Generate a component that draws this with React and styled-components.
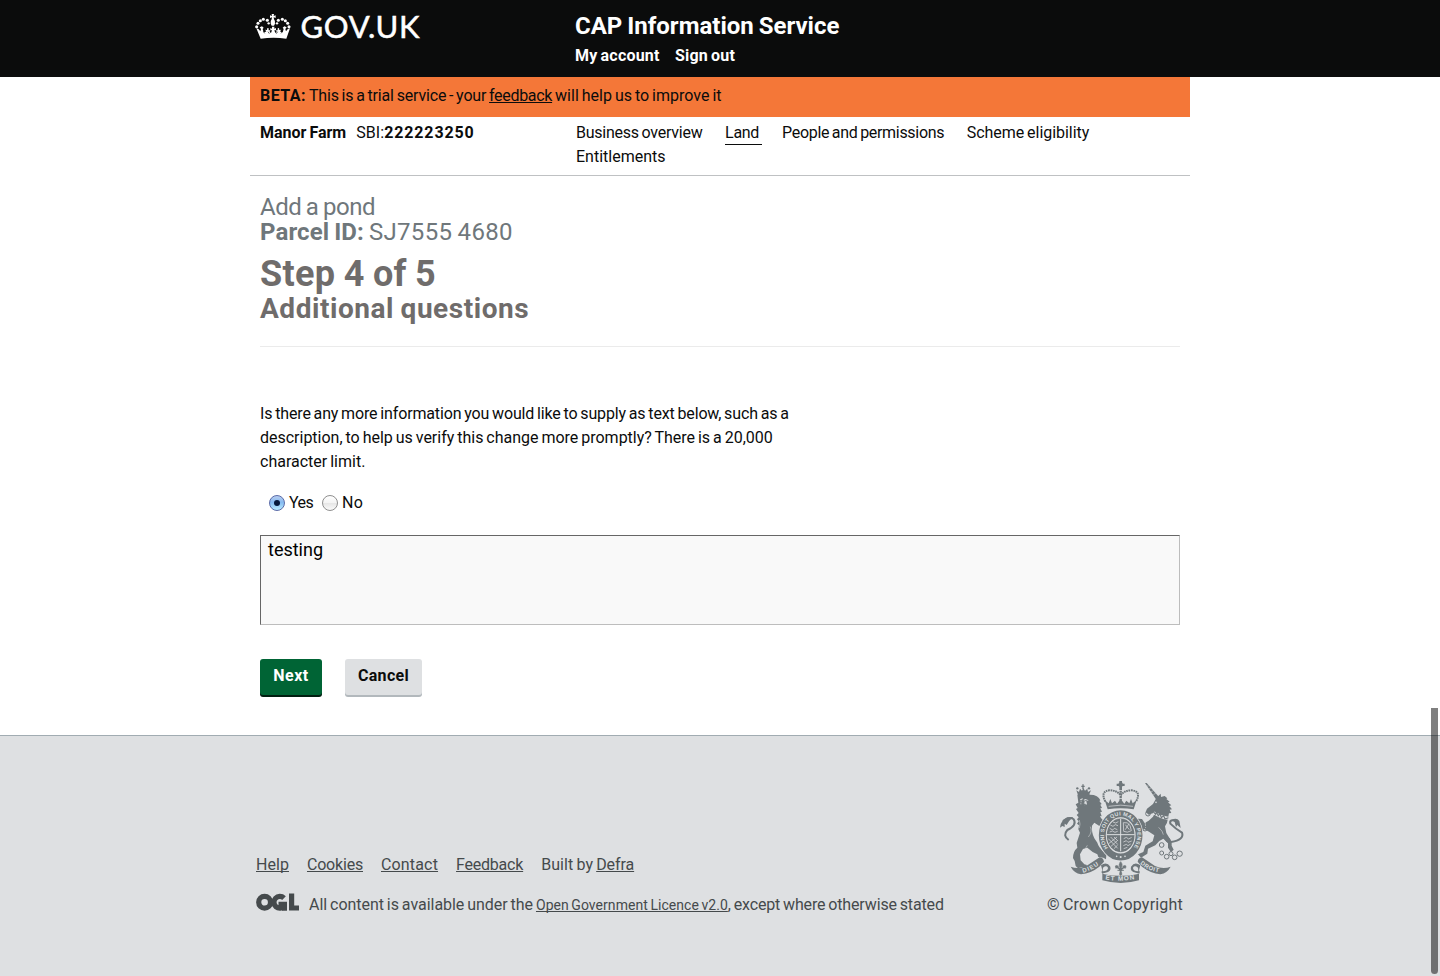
import React from 'react';
import styled, { createGlobalStyle } from 'styled-components';

const GlobalStyle = createGlobalStyle`
  * { box-sizing: border-box; }
  html, body { margin: 0; background: #fff; }
  body {
    height: 976px;
    overflow: hidden;
    font: 400 16px/24px Roboto, "Liberation Sans", sans-serif;
    word-spacing: -1px;
    color: #0b0c0c;
  }
`;

const Text = styled.span`
  letter-spacing: ${(p) => p.$track || 0}px;
  white-space: pre;
`;
const Strong = styled(Text).attrs({ as: 'strong' })`
  font-weight: 700;
`;
const Link = styled(Text).attrs({ as: 'a', href: '#' })`
  color: inherit;
  text-decoration: ${(p) => (p.$plain ? 'none' : 'underline')};
  text-decoration-thickness: 1px;
  text-underline-offset: 1px;
  text-decoration-skip-ink: none;
`;

const Page = styled.div`
  position: relative;
  height: 976px;
  display: flex;
  flex-direction: column;
`;
const Container = styled.div`
  width: 940px;
  margin: 0 auto;
`;

const Header = styled.header`
  height: 77px;
  background: #0b0c0c;
  color: #fff;
`;
const HeaderInner = styled(Container)`
  display: grid;
  grid-template-columns: 320px 1fr;
  padding-left: 5px;
`;
const Brand = styled.a`
  display: flex;
  gap: 10px;
  padding-top: 13px;
  color: #fff;
`;
const ServiceName = styled.div`
  padding-top: 11px;
  font-size: 24px;
  line-height: 30px;
  font-weight: 700;
`;
const AccountLinks = styled.nav`
  display: flex;
  gap: 15.5px;
  padding-top: 3px;
  font-weight: 700;
`;

const BetaBanner = styled(Container)`
  height: 40px;
  padding: 7px 10px 0;
  background: #f47738;
`;
const BusinessBar = styled(Container)`
  display: grid;
  grid-template-columns: 316px 1fr;
  height: 59px;
  padding: 4px 10px 0;
  border-bottom: 1px solid #bfc1c3;
`;
const Business = styled.div`
  display: flex;
  gap: 10px;
`;
const MainNav = styled.nav`
  display: flex;
  flex-wrap: wrap;
  align-content: flex-start;
  width: 560px;
`;
const NavLink = styled(Link)`
  height: 24px;
  margin-right: ${(p) => (p.$current ? 20 : 22.6)}px;
  padding-right: ${(p) => (p.$current ? 3 : 0)}px;
  box-shadow: ${(p) => (p.$current ? 'inset 0 -1px #0b0c0c' : 'none')};
`;

const Main = styled(Container).attrs({ as: 'main' })`
  flex: 1;
  padding: 19px 10px 0;
`;
const TaskTitle = styled.div`
  font-size: 24px;
  line-height: 25px;
  color: #6f777b;
`;
const StepTitle = styled.h1`
  margin: 9px 0 0;
  font-size: 36px;
  line-height: 40px;
  color: #6f6c6b;
`;
const StepSubtitle = styled.h2`
  margin: 0;
  padding-bottom: 23px;
  border-bottom: 1px solid #ebebeb;
  font-size: 28px;
  line-height: 29px;
  color: #6f6c6b;
`;
const Question = styled.p`
  display: flex;
  flex-direction: column;
  margin: 55px 0 0;
`;
const Choices = styled.div`
  display: flex;
  gap: 9px;
  padding: 17px 9px 0;
`;
const Choice = styled.label`
  display: flex;
  align-items: center;
  gap: 4px;
`;
const Radio = styled.span`
  display: flex;
  align-items: center;
  justify-content: center;
  width: 16px;
  height: 16px;
  border: 1px solid ${(p) => (p.$on ? '#5a6ba8' : '#8f8f8f')};
  border-radius: 50%;
  background: ${(p) =>
    p.$on
      ? 'linear-gradient(#b9cdf0, #85baf0 45%, #b9ecff)'
      : 'linear-gradient(#fff, #f4f4f4 48%, #e6e6e6 52%, #fafafa)'};
  &::after {
    content: '';
    width: ${(p) => (p.$on ? 6 : 0)}px;
    height: 6px;
    border-radius: 50%;
    background: #06193b;
  }
`;
const Answer = styled.div`
  height: 90px;
  margin-top: 20px;
  padding: 1px 7px;
  border: 1px solid;
  border-color: #666 #bdbdbd #bdbdbd #666;
  background: #f9f9f9;
  font-size: 18px;
  line-height: 25px;
  color: #000;
`;
const Actions = styled.div`
  display: flex;
  gap: 23px;
  margin-top: 34px;
`;
const Button = styled.button`
  width: ${(p) => (p.$primary ? 62 : 77)}px;
  height: 36px;
  padding: 0 0 3px;
  border: 0;
  border-radius: 3px;
  background: ${(p) => (p.$primary ? '#006435' : '#dee0e2')};
  box-shadow: 0 2px 0 ${(p) => (p.$primary ? '#001e10' : '#b2b8bc')};
  color: ${(p) => (p.$primary ? '#fff' : '#0b0c0c')};
  font: 700 16px/24px Roboto, sans-serif;
`;

const Footer = styled.footer`
  height: 241px;
  border-top: 1px solid #a1acb2;
  background: #dee0e2;
  color: #454a4c;
`;
const FooterInner = styled(Container)`
  display: flex;
  justify-content: space-between;
  padding: 44px 6px 0;
`;
const FooterMeta = styled.div`
  padding-top: 73px;
`;
const FooterLinks = styled.div`
  display: flex;
  gap: 18px;
`;
const Licence = styled.div`
  display: flex;
  gap: 10px;
  margin-top: 16px;
`;
const Small = styled(Link)`
  font-size: 14px;
`;
const Copyright = styled.div`
  display: flex;
  flex-direction: column;
  align-items: flex-end;
  gap: 9px;
  padding-right: 1px;
`;
const CrestSvg = styled.svg`
  display: block;
  margin-right: -2.5px;
  overflow: visible;
`;
const WordmarkSvg = styled.svg`
  overflow: visible;
`;
const ScrollThumb = styled.div`
  position: absolute;
  top: 708px;
  right: 2px;
  width: 7px;
  height: 266px;
  border-radius: 0 0 4px 4px;
  background: rgba(0, 0, 0, 0.5);
`;

function Crown() {
  const pearls = [
    [50, 80, 4.6], [54, 70, 4.6], [61, 62, 4.6], [70, 58, 4.6], [82, 61, 4.6],
    [147, 80, 4.6], [143, 70, 4.6], [136, 62, 4.6], [127, 58, 4.6], [115, 61, 4.6],
    [86, 70, 3.6], [111, 70, 3.6],
  ];
  return (
    <svg width="36" height="27" viewBox="45 39 108 81" fill="currentColor">
      {pearls.map(([x, y, r]) => <circle key={`${x}-${y}`} cx={x} cy={y} r={r} />)}
      <path d="M95 42h7l-1 6 6-2v8l-6-2 1 6q5 6 3 13l-3 6h-7l-3-6q-2-7 3-13l1-6-6 2v-8l6 2Z" />
      <path d="M49 85q7 0 12 9l2-7-4-5 7-3 5 4-3 4 3 10q5 0 8-3l-4-5 6 1 1-6 4 1 0 6 5-1-2 6 4 3 3-8-5 0v-7l5 2v-6h7v6l5-2v7l-5 0 3 8 4-3-2-6 5 1 0-6 4-1 1 6 6-1-4 5q3 3 8 3l3-10-3-4 5-4 7 3-4 5 2 7q5-9 12-9l-11 31q-38-6-77 0Z" />
      <path d="M70 94l4 6M84 95l4 6M109 101l4-6M123 100l5-6" stroke="#0b0c0c" strokeWidth="2" />
    </svg>
  );
}

function Wordmark() {
  return (
    <WordmarkSvg width="124" height="32" viewBox="0 0 124 32" fill="currentColor">
      <text x="-0.5" y="24.7" fontFamily="Lato" fontSize="31" stroke="currentColor" strokeWidth="0.5" textLength="119" lengthAdjust="spacing" wordSpacing="0">GOV.UK</text>
    </WordmarkSvg>
  );
}

function OglLogo() {
  return (
    <svg width="43" height="19" viewBox="0 -0.6 43 19" fill="none" stroke="#454a4c" strokeWidth="5.2">
      <circle cx="8.6" cy="8.7" r="5.9" />
      <path d="M28 4.5A5.9 5.9 0 1 0 28.4 12.5V10.7H22.5" />
      <path d="M35.6 0v14.4H43" />
      <path d="M26 10h5v7.2h-5ZM33 4l3-3v4Z" fill="#454a4c" stroke="none" />
    </svg>
  );
}

const ink = '#6f777b';
const ground = '#dee0e2';

function RoyalArms() {
  return (
    <CrestSvg width="128" height="104" viewBox="52 31 384 312" fill={ink}>
      <defs>
        <path id="garter" d="M202 235A50 59 0 1 1 278 235" />
        <path id="motto" d="M194 329Q240 338 289 327" />
        <path id="dieu" d="M127 309Q153 303 177 284" />
        <path id="droit" d="M298 282Q325 305 357 308" />
      </defs>

      <g>
        <circle cx="240" cy="45" r="7" />
        <path d="M236 34h8v8h8v7h-8v12h-8V49h-8v-7h8Z" />
        <path d="M194 96Q178 64 207 62Q229 62 240 77Q251 62 273 62Q303 65 286 96" fill="none" stroke={ink} strokeWidth="6" strokeDasharray="5 2" />
        <path d="M240 63v31" stroke={ink} strokeWidth="7" strokeDasharray="6 2" />
        <path d="M192 91l12 10 5-13 5 13 9-8 6 9 11-14 11 14 6-9 9 8 5-13 5 13 12-10-9 28q-39-7-78 0Z" />
        <path d="M204 110q36-7 73 0" fill="none" stroke={ground} strokeWidth="2" />
      </g>

      <g>
        <path d="M112 76l-5-14 8 5 3-10 6 6 4-8 5 8 7-6 2 10 9-5-6 14Z" />
        <path d="M127 44v14M122 50h10" stroke={ink} strokeWidth="4" />
        <circle cx="110" cy="56" r="3.5" />
        <circle cx="145" cy="56" r="3.5" />
        <path d="M110 75q31-8 38 0q25 0 31 17l-3 2 7 9-4 2 5 10-5 1 5 10-5 2 4 12-5-1q4 12 16 16l-6 4 6 5-9 5-10-1-14-9-7 9q-2 20 7 38l9 13q3 12 19 28l8 8-1 14-8-5-15-2-3-8-14-7-16-13-13 4-9 16 2 18 11 12 8 2-4 9-13-2-10 3-7-7-3-15-5-9q0-20 13-31l-2-14 10-31-5-10 2-12-6-5 5-7-5-6 5-6-6-7 6-6-8-12 5-3-6-11 8-5Z" />
        <path d="M118 89l8-3 1 6 7-4 10 4-7 3 2 9-7 3-7-4-6 1 2-6Z" fill={ground} />
        <path d="M125 90l6 3-2 10 6 1-7 4-6-7ZM118 92l7 0M133 93l7 0" stroke={ink} strokeWidth="2.5" />
        <path d="M84 211Q65 198 80 181Q110 167 99 149Q87 139 67 154" fill="none" stroke={ink} strokeWidth="6" />
        <path d="M58 174q1-21 22-31l18-1q-14 11-20 24l-6-4 0 10-7-3Z" />
        <path d="M149 171q7 15-6 31M116 151q4 12 0 24M131 242l9-15" fill="none" stroke={ground} strokeWidth="1.5" />
      </g>

      <g>
        <path d="M313 40l5 0 37 42-8 8Z" />
        <path d="M318 49l6 0M324 58l7-3M331 67l7-4M338 75l7-4" stroke={ground} strokeWidth="1.5" />
        <path d="M347 85l13-13 1 10 11-3 8 7-3 2 10 8-5 2 10 9-6 2 8 10-7 1 5 10-7 1-4 19q-1 12-8 20l4 20 16 26 0 12 6 12-8 8-9-14 0-13-14-14-12 7-12 13-22 10-2 15-19 12-9-10 16-7 6-19 22-13 5-18-16-11-15-8-5 5 0 15-14 10-6-6 9-8-4-17-12-4-12-11-2-14 8-1 5 10 13-2 2-8 12 1 8 12 12-7 13-12 7-13-20 7-9-8 4-10 18-14Z" />
        <path d="M339 129q22 14 43 17" fill="none" stroke={ground} strokeWidth="9" />
        <path d="M340 128l5 6 2-7 6 11 5-6 4 12 7-6 4 10 10-4" fill="none" stroke={ink} strokeWidth="3.5" />
        <circle cx="346" cy="98" r="2.5" fill={ground} />
        <path d="M391 217Q432 210 424 189Q404 177 389 162Q385 147 409 154" fill="none" stroke={ink} strokeWidth="6" />
        <path d="M393 151q15-9 23 3l4 21-10-9-4 6-4-15Z" />
        <path d="M315 146q-2 18 0 29M354 173q13 12 14 22" fill="none" stroke={ground} strokeWidth="1.6" />
        <g fill="none" stroke={ink} strokeWidth="3">
          <circle cx="322" cy="132" r="7" /><circle cx="313" cy="177" r="7" />
          <circle cx="363" cy="250" r="6" /><circle cx="378" cy="261" r="7" />
          <circle cx="391" cy="252" r="6" /><circle cx="402" cy="263" r="7" />
          <circle cx="417" cy="252" r="8" /><circle cx="363" cy="226" r="7" />
          <circle cx="382" cy="211" r="6" />
        </g>
      </g>

      <ellipse cx="240" cy="197" rx="68" ry="78" fill={ground} />
      <ellipse cx="240" cy="197" rx="55" ry="65" fill="none" stroke={ink} strokeWidth="21" />
      <ellipse cx="240" cy="197" rx="42" ry="51" />
      <ellipse cx="240" cy="197" rx="43" ry="52" fill="none" stroke={ground} strokeWidth="1.5" />
      <text fill={ground} fontFamily="Liberation Sans" fontSize="16" fontWeight="700" wordSpacing="0">
        <textPath href="#garter" textLength="250">HONI SOIT QUI MAL Y PENSE</textPath>
      </text>
      <path d="M240 147v98M198 195h84" stroke={ground} strokeWidth="3" />
      <g fill="none" stroke={ground} strokeWidth="2.2">
        <path d="M209 166l8 4 7-5 8 3M207 176l9 5 5-5 9 4M207 187l8-3 8 4 8-3M217 157l8 3 8-4" />
        <path d="M248 159q13-3 20 8l4 16q-12 8-23 2ZM254 165l12 15M265 162l-11 18" />
        <path d="M203 207l28 29M210 202l21 22M220 202l11 11M204 222l25-20M210 231l21-19M220 237l11-11" />
        <path d="M249 207l8-4 7 5 9-5M248 217l9-4 5 5 11-4M248 228l9-4 5 4 8-5M249 237l11-4" />
      </g>
      <g fill={ground}>
        <circle cx="228" cy="260" r="2.5" /><circle cx="240" cy="262" r="3" /><circle cx="253" cy="260" r="2.5" />
      </g>

      <path d="M90 291q23 9 47-2l40-26q11 1 13 13l-14 15q-25 20-55 23-21-4-31-23Z" />
      <path d="M390 291q-23 9-47-2l-39-26q-11 1-13 13l13 15q26 20 55 23 21-4 31-23Z" />
      <path d="M181 287q17-12 28 4q4 15-15 18l-10 3q56 13 112 0l-10-3q-19-3-15-18 11-16 28-4l-4 15q5 5 0 12v18q-55 16-110 0v-18q-5-7 0-12Z" />
      <path d="M187 294q10-8 15 0 1 9-16 11ZM292 294q-10-8-15 0-1 9 16 11Z" fill={ground} />
      <g fill={ground} fontFamily="Liberation Sans" fontWeight="700" wordSpacing="0">
        <text fontSize="19"><textPath href="#motto" textLength="88">ET MON</textPath></text>
        <text fontSize="18"><textPath href="#dieu" textLength="53">DIEU</textPath></text>
        <text fontSize="18"><textPath href="#droit" textLength="62">DROIT</textPath></text>
      </g>
      <path d="M240 274q9 9 4 21 1-10 10-9 6 4 1 11-6-2-10 3h5v4h-7l2 10-5 6-5-6 2-10h-7v-4h5q-4-5-10-3-5-7 1-11 9-1 10 9-5-12 4-21Z" fill={ink} stroke={ground} strokeWidth="1" />
    </CrestSvg>
  );
}

export default function App() {
  return (
    <>
      <GlobalStyle />
      <Page>
        <Header>
          <HeaderInner>
            <Brand><Crown /><Wordmark /></Brand>
            <div>
              <ServiceName><Text>CAP Information Service</Text></ServiceName>
              <AccountLinks>
                <Link $plain $track={0.19}>My account</Link>
                <Link $plain $track={0.17}>Sign out</Link>
              </AccountLinks>
            </div>
          </HeaderInner>
        </Header>

        <BetaBanner>
          <Strong $track={0.46}>BETA:</Strong>{' '}
          <Text $track={-0.17}>{'This is a trial service - your '}</Text>
          <Link $track={-0.31}>feedback</Link>
          <Text>{' will help us to improve it'}</Text>
        </BetaBanner>

        <BusinessBar>
          <Business>
            <Strong>Manor Farm</Strong>
            <span><Text $track={0.07}>SBI:</Text><Strong $track={0.86}>222223250</Strong></span>
          </Business>
          <MainNav>
            <NavLink $plain $track={-0.24}>Business overview</NavLink>
            <NavLink $plain $current $track={-0.3}>Land</NavLink>
            <NavLink $plain $track={-0.31}>People and permissions</NavLink>
            <NavLink $plain $track={-0.045}>Scheme eligibility</NavLink>
            <NavLink $plain>Entitlements</NavLink>
          </MainNav>
        </BusinessBar>

        <Main>
          <TaskTitle><Text $track={-0.46}>Add a pond</Text></TaskTitle>
          <TaskTitle><Strong $track={0.1}>Parcel ID:</Strong> <Text $track={0.33}>SJ7555 4680</Text></TaskTitle>
          <StepTitle><Text $track={0.33}>Step 4 of 5</Text></StepTitle>
          <StepSubtitle><Text $track={0.55}>Additional questions</Text></StepSubtitle>
          <Question>
            <Text $track={-0.14}>Is there any more information you would like to supply as text below, such as a</Text>
            <Text $track={-0.01}>description, to help us verify this change more promptly? There is a 20,000</Text>
            <Text>character limit.</Text>
          </Question>
          <Choices>
            <Choice><Radio $on /><Text $track={-0.6}>Yes</Text></Choice>
            <Choice><Radio /><Text $track={0.25}>No</Text></Choice>
          </Choices>
          <Answer><Text>testing</Text></Answer>
          <Actions>
            <Button $primary><Text $track={0.5}>Next</Text></Button>
            <Button><Text $track={0.3}>Cancel</Text></Button>
          </Actions>
        </Main>

        <Footer>
          <FooterInner>
            <FooterMeta>
              <FooterLinks>
                <Link $track={0.05}>Help</Link>
                <Link $track={-0.2}>Cookies</Link>
                <Link $track={0.16}>Contact</Link>
                <Link $track={-0.22}>Feedback</Link>
                <span><Text $track={0.09}>{'Built by '}</Text><Link $track={-0.08}>Defra</Link></span>
              </FooterLinks>
              <Licence>
                <OglLogo />
                <span>
                  <Text $track={-0.035}>{'All content is available under the '}</Text>
                  <Small $track={0.05}>Open Government Licence v2.0</Small>
                  <Text $track={-0.14}>, except where otherwise stated</Text>
                </span>
              </Licence>
            </FooterMeta>
            <Copyright>
              <RoyalArms />
              <Text $track={0.2}>© Crown Copyright</Text>
            </Copyright>
          </FooterInner>
        </Footer>
        <ScrollThumb />
      </Page>
    </>
  );
}
